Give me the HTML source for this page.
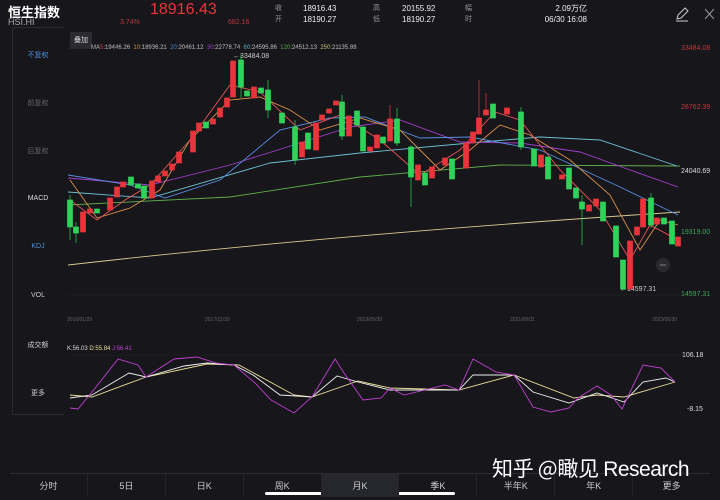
<!DOCTYPE html>
<html><head><meta charset="utf-8"><style>
*{margin:0;padding:0;box-sizing:border-box}
body{width:720px;height:500px;background:#16161b;overflow:hidden;position:relative;font-family:"Liberation Sans","Noto Sans CJK SC",sans-serif;color:#ddd}
.a{position:absolute;white-space:nowrap}
.side{position:absolute;left:12px;top:27px;width:52px;height:388px;border:1px solid #2a2a31;border-right:none}
.side div{position:absolute;left:0;width:50px;text-align:center;font-size:7px;color:#ccc}
.tabs{position:absolute;left:10px;top:473px;width:700px;height:24px;display:flex;border-top:1px solid #2a2a30}
.tabs div{flex:1;text-align:center;font-size:9px;line-height:24px;color:#ccc;border-right:1px solid #24242a}
</style></head><body>
<div class="a" style="left:8px;top:2px;font-size:13px;font-weight:bold;color:#fff">恒生指数</div>
<div class="a" style="left:8px;top:17px;font-size:9px;color:#aaa">HSI.HI</div>
<div class="a" style="left:150px;top:1px;font-size:16px;color:#e8353b">18916.43</div>
<div class="a" style="left:120px;top:19px;font-size:7px;color:#b83a3e">3.74%</div>
<div class="a" style="left:228px;top:19px;font-size:7px;color:#b83a3e">682.16</div>
<div class="a" style="left:275px;top:3px;font-size:7px;color:#999;line-height:11px">收<br>开</div>
<div class="a" style="left:303px;top:3px;font-size:8px;color:#eee;line-height:11px">18916.43<br>18190.27</div>
<div class="a" style="left:373px;top:3px;font-size:7px;color:#999;line-height:11px">高<br>低</div>
<div class="a" style="left:402px;top:3px;font-size:8px;color:#eee;line-height:11px">20155.92<br>18190.27</div>
<div class="a" style="left:465px;top:3px;font-size:7px;color:#999;line-height:11px">幅<br>时</div>
<div class="a" style="left:530px;top:3px;width:57px;text-align:right;font-size:8px;color:#eee;line-height:11px">2.09万亿<br>06/30 16:08</div>
<svg class="a" style="left:674px;top:6px" width="42" height="16"><path d="M3 13l1-4 7-7 3 3-7 7z M2 15h12" stroke="#ccc" fill="none" stroke-width="1"/><path d="M31 3l9 10M40 3l-9 10" stroke="#999" stroke-width="1"/></svg>

<div class="side">
<div style="top:22px;color:#4a8fd8">不复权</div>
<div style="top:70px;color:#666">前复权</div>
<div style="top:118px;color:#666">后复权</div>
<div style="top:167px;color:#ddd">MACD</div>
<div style="top:215px;color:#4a8fd8">KDJ</div>
<div style="top:264px">VOL</div>
<div style="top:312px">成交额</div>
<div style="top:360px">更多</div>
</div>
<div class="a" style="left:70px;top:32px;width:22px;height:17px;background:#2a2a30;font-size:7px;line-height:17px;text-align:center;color:#ddd">叠加</div>
<div class="a" style="left:91px;top:45px;font-size:6px;color:#ccc">MA<span style="color:#e8353b">5</span>:19446.26 &nbsp;<span style="color:#d8904a">10</span>:18936.21 &nbsp;<span style="color:#4a8fd8">20</span>:20461.12 &nbsp;<span style="color:#a040c8">30</span>:22778.74 &nbsp;<span style="color:#5cb8c8">60</span>:24595.86 &nbsp;<span style="color:#5fae4a">120</span>:24512.13 &nbsp;<span style="color:#d8c878">250</span>:21135.88</div>
<div class="a" style="left:233px;top:53px;font-size:7px;color:#ccc">←33484.08</div>
<div class="a" style="left:620px;top:286px;font-size:7px;color:#ccc">←14597.31</div>
<div class="a" style="left:681px;top:45px;font-size:7px;color:#c0393d">33484.08</div>
<div class="a" style="left:681px;top:104px;font-size:7px;color:#c0393d">28762.39</div>
<div class="a" style="left:681px;top:168px;font-size:7px;color:#ddd">24040.69</div>
<div class="a" style="left:681px;top:229px;font-size:7px;color:#3fa85a">19319.00</div>
<div class="a" style="left:681px;top:291px;font-size:7px;color:#3fa85a">14597.31</div>
<div class="a" style="left:67px;top:317px;font-size:5px;color:#666">2016/01/29</div>
<div class="a" style="left:205px;top:317px;font-size:5px;color:#666">2017/11/30</div>
<div class="a" style="left:357px;top:317px;font-size:5px;color:#666">2019/09/30</div>
<div class="a" style="left:510px;top:317px;font-size:5px;color:#666">2021/08/31</div>
<div class="a" style="left:652px;top:317px;font-size:5px;color:#666">2023/06/30</div>
<div class="a" style="left:67px;top:346px;font-size:6px;color:#ddd">K:56.03 <span style="color:#e8e0a0">D:55.84</span> <span style="color:#c040d0">J:56.41</span></div>
<div class="a" style="left:682px;top:352px;font-size:7px;color:#ddd">106.18</div>
<div class="a" style="left:687px;top:406px;font-size:7px;color:#ddd">-8.15</div>

<svg class="a" style="left:0;top:0" width="720" height="500">
<g stroke="#222228" stroke-width="0.6"><line x1="66" y1="48" x2="685" y2="48"/><line x1="66" y1="295" x2="685" y2="295"/><line x1="66" y1="355" x2="685" y2="355"/><line x1="66" y1="416" x2="685" y2="416"/></g>
<g fill="none" stroke-width="0.9">
<path d="M68 265 C200 250 400 230 680 212" stroke="#d8c890"/>
<path d="M68 205 L230 197 L360 177 L500 165 L680 166" stroke="#5fae4a"/>
<path d="M68 192 L150 198 L270 163 L360 153 L470 143 L540 137 L600 140 L677 166" stroke="#6cc0d0"/>
<path d="M68 178 L150 185 L230 165 L300 143 L350 127 L400 120 L460 142 L520 143 L580 152 L630 170 L678 187" stroke="#a040c8"/>
<path d="M68 175 L130 185 L165 198 L220 180 L280 130 L330 118 L365 117 L420 138 L470 137 L540 150 L620 187 L678 215" stroke="#5a8ee0"/>
<path d="M70 180 L97 218 L130 208 L160 190 L190 140 L230 100 L260 97 L290 110 L320 130 L360 118 L400 130 L440 170 L470 150 L500 125 L530 135 L570 160 L610 195 L640 250 L660 220 L678 225" stroke="#d8904a"/>
<path d="M70 200 L97 220 L125 200 L150 185 L190 140 L230 85 L260 92 L300 130 L340 115 L380 140 L420 175 L460 150 L495 112 L520 120 L560 170 L600 210 L630 260 L650 225 L678 240" stroke="#e8555a"/>
</g>
<g stroke-width="0.7">
<g stroke="#2fd35a" fill="#2fd35a">
<line x1="70" y1="195" x2="70" y2="240"/><rect x="67.5" y="200" width="5" height="27"/>
<line x1="76" y1="222" x2="76" y2="243"/><rect x="73.5" y="227" width="5" height="6"/>
<rect x="94.5" y="209" width="5" height="4"/>
<rect x="128.5" y="177" width="5" height="8"/>
<rect x="135.5" y="184" width="5" height="4"/>
<rect x="141.5" y="186" width="5" height="12"/>
<rect x="203.5" y="122" width="5" height="6"/>
<line x1="241" y1="55" x2="241" y2="98"/><rect x="238.5" y="60" width="5" height="27"/>
<rect x="244.5" y="91" width="5" height="5"/>
<rect x="258.5" y="88" width="5" height="5"/>
<line x1="268" y1="80" x2="268" y2="118"/><rect x="265.5" y="90" width="5" height="20"/>
<rect x="279.5" y="113" width="5" height="10"/>
<line x1="295" y1="120" x2="295" y2="165"/><rect x="292.5" y="127" width="5" height="33"/>
<rect x="305.5" y="133" width="5" height="16"/>
<line x1="342" y1="95" x2="342" y2="140"/><rect x="339.5" y="102" width="5" height="34"/>
<rect x="354.5" y="111" width="5" height="14"/>
<rect x="360.5" y="127" width="5" height="24"/>
<rect x="380.5" y="137" width="5" height="6"/>
<line x1="397" y1="108" x2="397" y2="146"/><rect x="394.5" y="119" width="5" height="24"/>
<line x1="411" y1="145" x2="411" y2="207"/><rect x="408.5" y="147" width="5" height="30"/>
<rect x="422.5" y="173" width="5" height="12"/>
<rect x="449.5" y="159" width="5" height="20"/>
<rect x="490.5" y="104" width="5" height="14"/>
<line x1="521" y1="107" x2="521" y2="150"/><rect x="518.5" y="112" width="5" height="35"/>
<rect x="531.5" y="149" width="5" height="17"/>
<rect x="545.5" y="157" width="5" height="22"/>
<rect x="566.5" y="168" width="5" height="21"/>
<rect x="573.5" y="188" width="5" height="10"/>
<line x1="582" y1="195" x2="582" y2="245"/><rect x="579.5" y="202" width="5" height="7"/>
<rect x="600.5" y="202" width="5" height="19"/>
<rect x="613.5" y="226" width="5" height="31"/>
<rect x="620.5" y="260" width="5" height="29"/>
<line x1="651" y1="193" x2="651" y2="228"/><rect x="648.5" y="198" width="5" height="27"/>
<rect x="661.5" y="218" width="5" height="6"/>
<rect x="669.5" y="221" width="5" height="23"/>
</g>
<g stroke="#e8353b" fill="#e8353b">
<rect x="80.5" y="212" width="5" height="20"/>
<rect x="87.5" y="209" width="5" height="4"/>
<rect x="107.5" y="198" width="5" height="12"/>
<rect x="114.5" y="187" width="5" height="10"/>
<rect x="120.5" y="182" width="5" height="5"/>
<rect x="149.5" y="181" width="5" height="17"/>
<rect x="155.5" y="176" width="5" height="6"/>
<rect x="162.5" y="171" width="5" height="5"/>
<rect x="169.5" y="164" width="5" height="6"/>
<rect x="176.5" y="152" width="5" height="11"/>
<rect x="190.5" y="131" width="5" height="21"/>
<rect x="196.5" y="123" width="5" height="8"/>
<rect x="210.5" y="119" width="5" height="5"/>
<rect x="217.5" y="108" width="5" height="9"/>
<rect x="224.5" y="98" width="5" height="9"/>
<rect x="230.5" y="61" width="5" height="36"/>
<rect x="251.5" y="87" width="5" height="11"/>
<rect x="299.5" y="142" width="5" height="15"/>
<rect x="313.5" y="123" width="5" height="27"/>
<rect x="319.5" y="115" width="5" height="5"/>
<rect x="326.5" y="109" width="5" height="4"/>
<rect x="333.5" y="101" width="5" height="4"/>
<rect x="346.5" y="116" width="5" height="20"/>
<rect x="367.5" y="147" width="5" height="4"/>
<rect x="374.5" y="135" width="5" height="13"/>
<line x1="390" y1="105" x2="390" y2="141"/><rect x="387.5" y="119" width="5" height="22"/>
<rect x="415.5" y="165" width="5" height="15"/>
<rect x="429.5" y="167" width="5" height="11"/>
<rect x="442.5" y="158" width="5" height="7"/>
<rect x="463.5" y="143" width="5" height="25"/>
<rect x="470.5" y="132" width="5" height="11"/>
<line x1="479" y1="80" x2="479" y2="134"/><rect x="476.5" y="118" width="5" height="16"/>
<line x1="486" y1="93" x2="486" y2="115"/><rect x="483.5" y="110" width="5" height="5"/>
<rect x="504.5" y="108" width="5" height="6"/>
<rect x="538.5" y="155" width="5" height="12"/>
<rect x="559.5" y="175" width="5" height="4"/>
<rect x="586.5" y="205" width="5" height="6"/>
<rect x="593.5" y="199" width="5" height="7"/>
<rect x="627.5" y="241" width="5" height="48"/>
<rect x="634.5" y="227" width="5" height="8"/>
<rect x="640.5" y="199" width="5" height="28"/>
<rect x="654.5" y="218" width="5" height="6"/>
<rect x="675.5" y="237" width="5" height="9"/>
</g>
<g fill="#2a2a2f" stroke="none"><circle cx="663" cy="265" r="7"/></g>
<line x1="660" y1="265" x2="666" y2="265" stroke="#aaa"/>
</g>
<g fill="none" stroke-width="0.9">
<path d="M70 395 L92 397 L146 377 L207 364 L239 365 L294 395 L312 397 L358 381 L390 388 L459 390 L514 375 L574 398 L597 395 L624 397 L675 382" stroke="#e8dc98"/>
<path d="M70 398 L92 395 L129 373 L146 377 L184 366 L207 363 L234 365 L253 375 L280 395 L312 397 L337 376 L358 382 L390 390 L459 390 L473 375 L514 375 L533 392 L569 403 L597 393 L624 402 L643 382 L666 378 L675 382" stroke="#f0f0f0"/>
<path d="M70 408 L78 409 L96 387 L118 359 L138 365 L146 377 L174 359 L197 357 L216 363 L234 365 L255 383 L271 400 L294 413 L312 397 L335 359 L344 373 L363 400 L381 398 L390 388 L404 395 L445 385 L459 390 L473 359 L496 372 L514 375 L533 407 L551 412 L569 408 L578 398 L597 386 L611 395 L622 409 L643 365 L661 368 L675 382" stroke="#c040d0"/>
</g>
<rect x="265" y="492" width="190" height="3" rx="1.5" fill="#fff"/>
</svg>
<div class="tabs"><div>分时</div><div>5日</div><div>日K</div><div>周K</div><div style="background:#26272c">月K</div><div>季K</div><div>半年K</div><div>年K</div><div style="border:none">更多</div></div>
<div class="a" style="left:492px;top:453px;font-size:21px;color:#fff;font-family:'Noto Sans CJK SC','Liberation Sans',sans-serif;letter-spacing:-0.3px">知乎 @瞰见 <span style="font-family:'Liberation Sans',sans-serif;letter-spacing:-0.5px">Research</span></div>
</body></html>
